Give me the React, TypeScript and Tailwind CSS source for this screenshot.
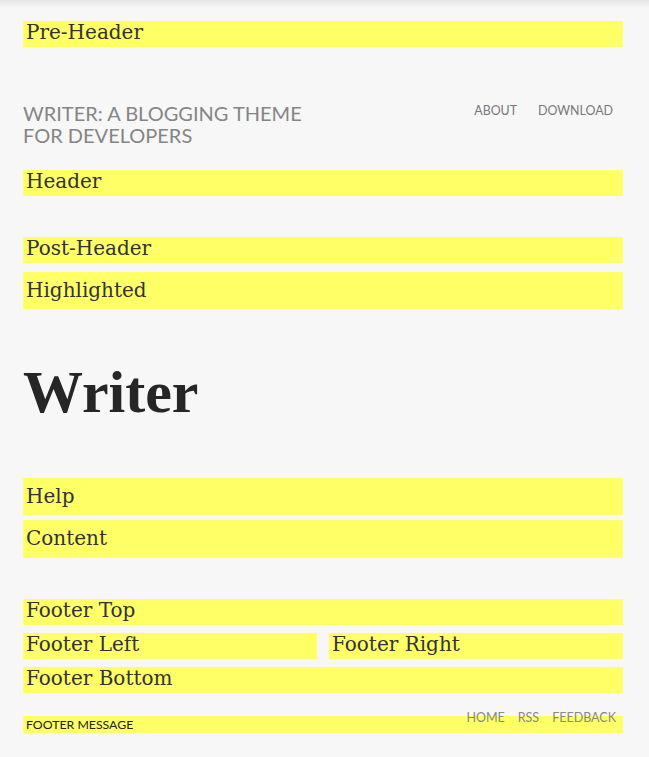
import React from 'react';

const serif = { fontFamily: '"DejaVu Serif", serif' };

// ─── Region bar ──────────────────────────────────────────────────────────────

function Region({ label, className = '' }: { label: string; className?: string }) {
  return (
    <div
      className={`bg-[#ffff66] pl-[3px] text-[20px] leading-[22px] text-[#333] ${className}`}
      style={serif}
    >
      {label}
    </div>
  );
}

export default function App() {
  return (
    <div className="min-h-[757px] bg-[#f7f7f7] font-['Lato',sans-serif]">
      <div className="h-[8px] bg-gradient-to-b from-[#e4e4e4] to-[#f7f7f7]" />

      <div className="ml-[23px] w-[600px] pb-[24px]">
        <Region label="Pre-Header" className="mt-[13px] h-[26px]" />

        {/* ── Masthead ─────────────────────────────────────────────── */}
        <div className="mt-[55px] flex items-start justify-between">
          <div className="w-[300px] text-[20px] leading-[22px] uppercase text-[#858585]">
            Writer: A Blogging Theme for Developers
          </div>
          <nav className="flex gap-[21px] pr-[10px] pt-[1px] text-[12.4px] leading-[16px] uppercase text-[#777]">
            <span>About</span>
            <span>Download</span>
          </nav>
        </div>

        <Region label="Header" className="mt-[24px] h-[26px]" />
        <Region label="Post-Header" className="mt-[41px] h-[26px]" />
        <Region label="Highlighted" className="mt-[9px] h-[37px] pt-[7px]" />

        <h1
          className="mt-[53px] text-[60px] leading-[60px] font-bold text-[#262626]"
          style={{ fontFamily: '"Liberation Serif", serif' }}
        >
          Writer
        </h1>

        <Region label="Help" className="mt-[56px] h-[37px] pt-[7px]" />
        <Region label="Content" className="mt-[5px] h-[38px] pt-[7px]" />

        {/* ── Footer ───────────────────────────────────────────────── */}
        <Region label="Footer Top" className="mt-[41px] h-[26px]" />
        <div className="mt-[8px] flex gap-[12px]">
          <Region label="Footer Left" className="h-[26px] flex-1" />
          <Region label="Footer Right" className="h-[26px] flex-1" />
        </div>
        <Region label="Footer Bottom" className="mt-[8px] h-[26px]" />

        <div className="relative mt-[23px] h-[17px] bg-[#ffff66] pl-[3px] text-[12.3px] leading-[17px] uppercase text-[#222]">
          Footer Message
          <nav className="absolute right-[7px] top-[-6px] flex gap-[13px] text-[12.5px] leading-[16px] uppercase text-[#888]">
            <span>Home</span>
            <span>RSS</span>
            <span>Feedback</span>
          </nav>
        </div>
      </div>
    </div>
  );
}
